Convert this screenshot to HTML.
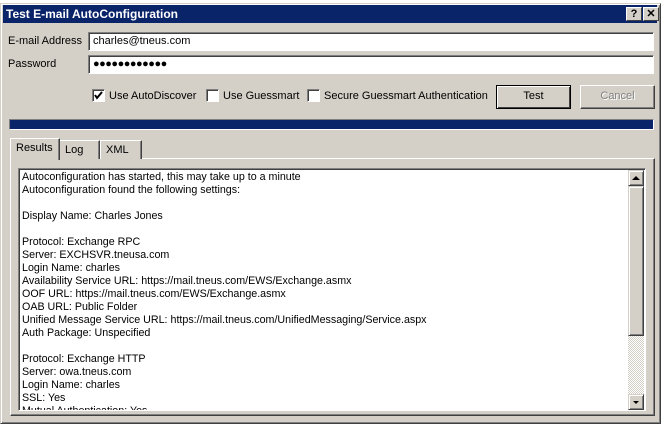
<!DOCTYPE html>
<html><head><meta charset="utf-8"><style>
*{margin:0;padding:0;box-sizing:border-box}
body{width:666px;height:435px;background:#fff;position:relative;overflow:hidden;font-family:"Liberation Sans",Tahoma,sans-serif;font-size:11px;color:#000}
.a{position:absolute}
.win{left:0;top:3px;width:661px;height:421px;background:#d4d0c8;border:1px solid #d4d0c8;border-right-color:#404040;border-bottom-color:#404040;box-shadow:inset 1px 1px 0 #fff,inset -1px -1px 0 #808080}
.title{left:3px;top:5px;width:654px;height:18px;background:#0a246a;color:#fff;font-weight:bold;font-size:12px;line-height:18px;padding-left:3px}
.tb{top:7px;width:16px;height:14px;background:#d4d0c8;border:1px solid;border-color:#fff #404040 #404040 #fff;font-weight:bold;font-size:11px;line-height:12px;text-align:center;color:#000}
.inp{left:88px;width:566px;height:19px;background:#fff;border:1px solid;border-color:#808080 #fff #fff #808080;box-shadow:inset 1px 1px 0 #404040;font-size:11px;line-height:17px;padding-left:4px}
.lbl{left:8px;font-size:11px}
.cb{width:13px;height:13px;background:#fff;border:1px solid;border-color:#808080 #fff #fff #808080;box-shadow:inset 1px 1px 0 #404040;top:89px}
.ct{top:90px;font-size:11px}
.btn{top:85px;width:75px;height:24px;background:#d4d0c8;border:1px solid;border-color:#fff #404040 #404040 #fff;box-shadow:inset -1px -1px 0 #808080;font-size:11px;text-align:center;line-height:21px}
.tab{top:140px;height:19px;background:#d4d0c8;border:1px solid;border-bottom:none;border-color:#fff #404040 #fff #fff;box-shadow:inset -1px 0 0 #808080;padding-left:5px;font-size:11px;line-height:18px}
.txt{left:18px;top:168px;width:628px;height:243px;background:#fff;border:1px solid;border-color:#808080 #fff #fff #808080;box-shadow:inset 1px 1px 0 #404040;overflow:hidden}
.lines{position:absolute;left:3px;top:2px;font-size:10.7px;line-height:13px;white-space:pre}
.sb{position:absolute;left:609px;width:16px;background:#d4d0c8;border:1px solid;border-color:#d4d0c8 #404040 #404040 #d4d0c8;box-shadow:inset 1px 1px 0 #fff,inset -1px -1px 0 #808080}
</style></head><body>
<div class="a win"></div>
<div class="a title">Test E-mail AutoConfiguration</div>
<div class="a tb" style="left:626px">?</div>
<div class="a tb" style="left:643px">✕</div>
<div class="a lbl" style="top:35px">E-mail Address</div>
<div class="a lbl" style="top:58px">Password</div>
<div class="a inp" style="top:32px">charles@tneus.com</div>
<div class="a inp" style="top:55px;font-size:11px;letter-spacing:-0.5px;font-weight:bold">●●●●●●●●●●●●</div>
<div class="a cb" style="left:92px"><svg width="11" height="11" style="position:absolute;left:0;top:0"><path d="M2 5 L4 8 L9 2" stroke="#000" stroke-width="2" fill="none"/></svg></div>
<div class="a ct" style="left:109px">Use AutoDiscover</div>
<div class="a cb" style="left:206px"></div>
<div class="a ct" style="left:223px">Use Guessmart</div>
<div class="a cb" style="left:307px"></div>
<div class="a ct" style="left:324px">Secure Guessmart Authentication</div>
<div class="a btn" style="left:496px;border:1px solid #000;box-shadow:inset 1px 1px 0 #fff,inset -1px -1px 0 #404040">Test</div>
<div class="a btn" style="left:580px;color:#808080;text-shadow:1px 1px 0 #fff">Cancel</div>
<div class="a" style="left:9px;top:119px;width:645px;height:11px;border:1px solid;border-color:#808080 #fff #fff #808080;background:#0a246a"></div>
<div class="a" style="left:10px;top:158px;width:645px;height:258px;border:1px solid;border-color:#fff #404040 #404040 #fff;box-shadow:inset -1px -1px 0 #808080"></div>
<div class="a tab" style="left:59px;width:41px">Log</div>
<div class="a tab" style="left:100px;width:42px">XML</div>
<div class="a tab" style="left:10px;top:138px;width:50px;height:22px;border-right:1px solid #404040">Results</div>
<div class="a txt">
<div class="lines">Autoconfiguration has started, this may take up to a minute
Autoconfiguration found the following settings:

Display Name: Charles Jones

Protocol: Exchange RPC
Server: EXCHSVR.tneusa.com
Login Name: charles
Availability Service URL: https://mail.tneus.com/EWS/Exchange.asmx
OOF URL: https://mail.tneus.com/EWS/Exchange.asmx
OAB URL: Public Folder
Unified Message Service URL: https://mail.tneus.com/UnifiedMessaging/Service.aspx
Auth Package: Unspecified

Protocol: Exchange HTTP
Server: owa.tneus.com
Login Name: charles
SSL: Yes
Mutual Authentication: Yes</div>
<div style="position:absolute;left:609px;top:1px;width:16px;height:240px;background:repeating-conic-gradient(#fff 0 25%,#d4d0c8 0 50%) 0 0/2px 2px"></div>
<div class="sb" style="top:1px;height:16px"><svg width="14" height="14"><path d="M3 9 L7 5 L11 9Z" fill="#000"/></svg></div>
<div class="sb" style="top:17px;height:150px"></div>
<div class="sb" style="top:225px;height:16px"><svg width="14" height="14"><path d="M4 6 L10 6 L7 9Z" fill="#000"/></svg></div>
</div>
</body></html>
